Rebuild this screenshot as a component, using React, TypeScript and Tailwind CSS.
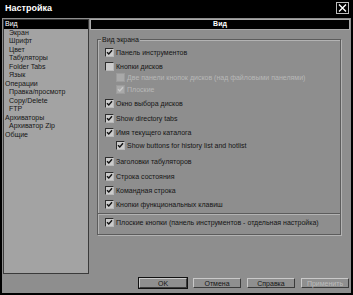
import React from "react";

const font = { fontFamily: '"Liberation Sans", Arial, sans-serif' };

const tree: { label: string; level: number; selected?: boolean }[] = [
  { label: "Вид", level: 0, selected: true },
  { label: "Экран", level: 1 },
  { label: "Шрифт", level: 1 },
  { label: "Цвет", level: 1 },
  { label: "Табуляторы", level: 1 },
  { label: "Folder Tabs", level: 1 },
  { label: "Язык", level: 1 },
  { label: "Операции", level: 0 },
  { label: "Правка/просмотр", level: 1 },
  { label: "Copy/Delete", level: 1 },
  { label: "FTP", level: 1 },
  { label: "Архиваторы", level: 0 },
  { label: "Архиватор Zip", level: 1 },
  { label: "Общие", level: 0 },
];

function Check({ checked, disabled }: { checked?: boolean; disabled?: boolean }) {
  return (
    <span
      className={
        "flex h-[9px] w-[9px] shrink-0 items-center justify-center border " +
        (disabled
          ? "border-[#9c9c9c] bg-[#a9a9a9]"
          : "border-t-[#2e2e2e] border-l-[#2e2e2e] border-b-[#b9b9b9] border-r-[#b9b9b9] bg-[#cbcbcb]")
      }
    >
      {checked && (
        <svg width="7" height="7" viewBox="0 0 7 7">
          <path
            d="M1 3.2 L2.8 5 L6 1.2"
            fill="none"
            stroke={disabled ? "#c8c8c8" : "#111"}
            strokeWidth="1.4"
          />
        </svg>
      )}
    </span>
  );
}

function Row({
  label,
  checked,
  disabled,
  sub,
  mt,
}: {
  label: string;
  checked?: boolean;
  disabled?: boolean;
  sub?: boolean;
  mt: string;
}) {
  return (
    <div className={"flex h-[9px] items-center gap-[2px] " + mt + (sub ? " pl-[11px]" : "")}>
      <Check checked={checked} disabled={disabled} />
      <span
        className={
          "whitespace-nowrap text-[7px] leading-[9px] " +
          (disabled ? "text-[#b8b8b8]" : "text-[#151515]")
        }
      >
        {label}
      </span>
    </div>
  );
}

function Btn({ label, def, disabled }: { label: string; def?: boolean; disabled?: boolean }) {
  return (
    <div
      className={
        "h-[12px] w-[50px] " + (def ? "border border-[#111]" : "border border-transparent")
      }
    >
      <div className="flex h-full w-full items-center justify-center border border-t-[#c9c9c9] border-l-[#c9c9c9] border-b-[#3a3a3a] border-r-[#3a3a3a] bg-[#8f8f8f]">
        <span
          className={
            "text-[7px] leading-none " + (disabled ? "text-[#bdbdbd]" : "text-[#151515]")
          }
        >
          {label}
        </span>
      </div>
    </div>
  );
}

export default function App() {
  return (
    <div className="flex h-[295px] w-[353px] flex-col bg-black" style={font}>
      {/* title bar */}
      <div className="flex h-[18px] items-center justify-between pl-[5px] pr-[4px]">
        <span className="text-[9px] font-bold text-white">Настройка</span>
        <div className="mb-[2px] flex h-[12px] w-[13px] items-center justify-center border border-[#bdbdbd]">
          <svg width="9" height="8" viewBox="0 0 9 8">
            <path d="M1 0.5 L8 7.5 M8 0.5 L1 7.5" stroke="#fff" strokeWidth="1.4" />
          </svg>
        </div>
      </div>

      {/* body */}
      <div className="mx-[2px] mb-[2px] flex flex-1 flex-col bg-[#8e8e8e] pl-[1px] pt-[1px]">
        <div className="flex h-[255px]">
          {/* tree */}
          <div className="w-[86px] border border-[#3a3a3a] bg-[#a3a3a3]">
            {tree.map((t) => (
              <div
                key={t.label}
                className={
                  "h-[8.5px] whitespace-nowrap text-[7px] leading-[8.5px] " +
                  (t.level ? "pl-[5px] " : "pl-[1px] ") +
                  (t.selected ? "bg-black text-white" : "text-[#151515]")
                }
              >
                {t.label}
              </div>
            ))}
          </div>

          {/* right side */}
          <div className="ml-[1px] flex flex-1 flex-col">
            <div className="mr-[1px] flex h-[11px] items-center justify-center border border-[#a9a9a9] bg-black">
              <span className="text-[7px] font-bold text-white">Вид</span>
            </div>

            <div className="relative ml-[7px] mr-[10px] mt-[9px] border border-[#5c5c5c] px-[7px] pb-[7px] pt-[8px] shadow-[inset_1px_1px_0_#b3b3b3,1px_1px_0_#b3b3b3]">
              <span className="absolute left-[3px] top-[-5px] bg-[#8e8e8e] px-[1px] text-[7px] leading-[9px] text-[#151515]">
                Вид экрана
              </span>
              <Row label="Панель инструментов" checked mt="mt-0" />
              <Row label="Кнопки дисков" mt="mt-[5px]" />
              <Row
                label="Две панели кнопок дисков (над файловыми панелями)"
                disabled
                sub
                mt="mt-[2px]"
              />
              <Row label="Плоские" checked disabled sub mt="mt-[3px]" />
              <Row label="Окно выбора дисков" checked mt="mt-[5px]" />
              <Row label="Show directory tabs" checked mt="mt-[6px]" />
              <Row label="Имя текущего каталога" checked mt="mt-[5px]" />
              <Row label="Show buttons for history list and hotlist" checked sub mt="mt-[4px]" />
              <Row label="Заголовки табуляторов" checked mt="mt-[7px]" />
              <Row label="Строка состояния" checked mt="mt-[6px]" />
              <Row label="Командная строка" checked mt="mt-[5px]" />
              <Row label="Кнопки функциональных клавиш" checked mt="mt-[5px]" />
              <div className="-mx-[7px] mt-[4px] h-[2px] border-t border-t-[#5c5c5c] border-b border-b-[#b3b3b3]" />
              <Row
                label="Плоские кнопки (панель инструментов - отдельная настройка)"
                checked
                mt="mt-[3px]"
              />
            </div>
          </div>
        </div>

        {/* buttons */}
        <div className="mr-[1px] mt-[3px] flex justify-end gap-[4px]">
          <Btn label="OK" def />
          <Btn label="Отмена" />
          <Btn label="Справка" />
          <Btn label="Применить" disabled />
        </div>
      </div>
    </div>
  );
}
